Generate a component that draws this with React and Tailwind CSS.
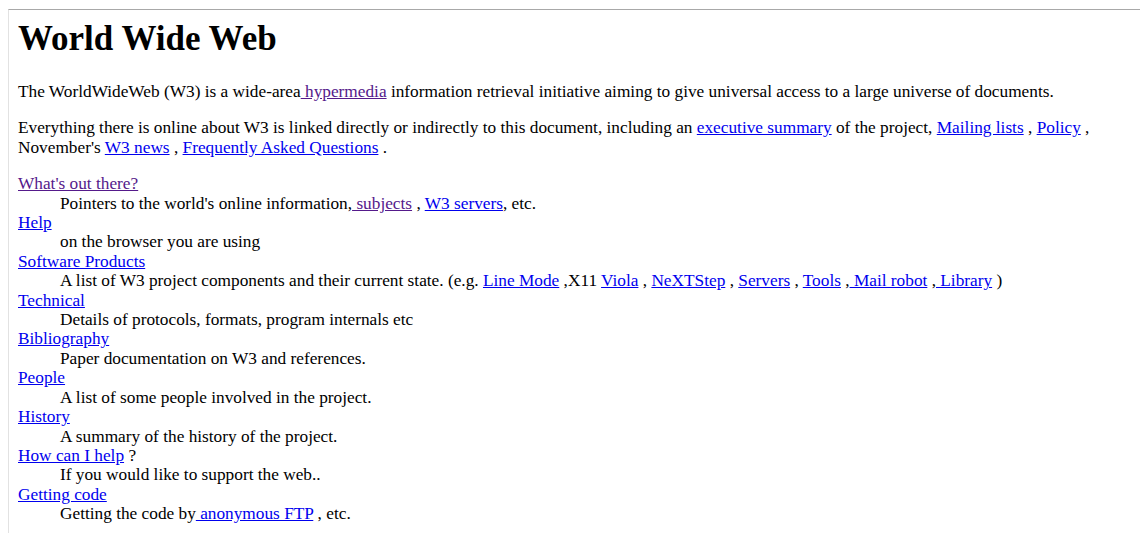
export default function App() {
  const link = "text-[#0000ee] underline";
  const seen = "text-[#551a8b] underline";

  const entries = [
    {
      term: <a href="#" className={seen}>What's out there?</a>,
      desc: (
        <>
          Pointers to the world's online information,<a href="#" className={seen}> subjects</a> ,{" "}
          <a href="#" className={link}>W3 servers</a>, etc.
        </>
      ),
    },
    {
      term: <a href="#" className={link}>Help</a>,
      desc: <>on the browser you are using</>,
    },
    {
      term: <a href="#" className={link}>Software Products</a>,
      desc: (
        <>
          A list of W3 project components and their current state. (e.g.{" "}
          <a href="#" className={link}>Line Mode</a> ,X11 <a href="#" className={link}>Viola</a> ,{" "}
          <a href="#" className={link}>NeXTStep</a> , <a href="#" className={link}>Servers</a> ,{" "}
          <a href="#" className={link}>Tools</a> ,<a href="#" className={link}> Mail robot</a> ,
          <a href="#" className={link}> Library</a> )
        </>
      ),
    },
    {
      term: <a href="#" className={link}>Technical</a>,
      desc: <>Details of protocols, formats, program internals etc</>,
    },
    {
      term: <a href="#" className={link}>Bibliography</a>,
      desc: <>Paper documentation on W3 and references.</>,
    },
    {
      term: <a href="#" className={link}>People</a>,
      desc: <>A list of some people involved in the project.</>,
    },
    {
      term: <a href="#" className={link}>History</a>,
      desc: <>A summary of the history of the project.</>,
    },
    {
      term: (
        <>
          <a href="#" className={link}>How can I help</a> ?
        </>
      ),
      desc: <>If you would like to support the web..</>,
    },
    {
      term: <a href="#" className={link}>Getting code</a>,
      desc: (
        <>
          Getting the code by<a href="#" className={link}> anonymous FTP</a> , etc.
        </>
      ),
    },
  ];

  return (
    <div className="min-h-[533px] bg-white pt-[9px] pl-[8px] font-['Liberation_Serif','Times_New_Roman',serif] text-black">
      <div className="min-h-[524px] border-t border-l border-t-[#a8a8a8] border-l-[#e2e2e2] pl-[9px] pt-px text-[17.3px] leading-[19.4px]">
        <h1 className="mt-[9px] mb-[24px] text-[35px] leading-[38px] font-bold">World Wide Web</h1>
        <p>
          The WorldWideWeb (W3) is a wide-area<a href="#" className={seen}> hypermedia</a> information
          retrieval initiative aiming to give universal access to a large universe of documents.
        </p>
        <p className="mt-[17px]">
          Everything there is online about W3 is linked directly or indirectly to this document,
          including an <a href="#" className={link}>executive summary</a> of the project,{" "}
          <a href="#" className={link}>Mailing lists</a> , <a href="#" className={link}>Policy</a> ,
          November's <a href="#" className={link}>W3 news</a> ,{" "}
          <a href="#" className={link}>Frequently Asked Questions</a> .
        </p>
        <dl className="mt-[17px]">
          {entries.map((e, i) => (
            <div key={i}>
              <dt>{e.term}</dt>
              <dd className="ml-[42px]">{e.desc}</dd>
            </div>
          ))}
        </dl>
      </div>
    </div>
  );
}
